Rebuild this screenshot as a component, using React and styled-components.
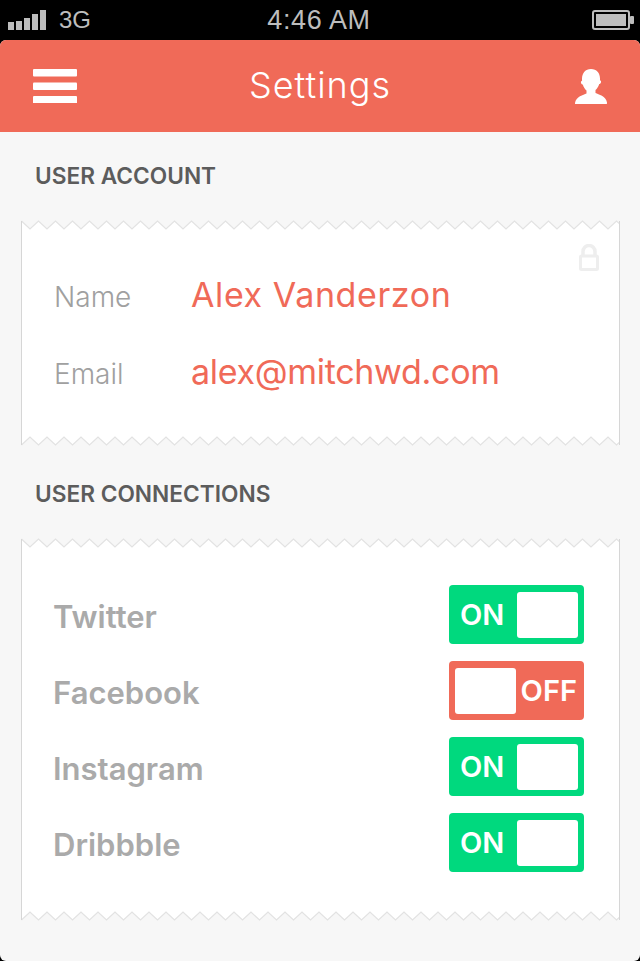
import React from 'react';
import styled, { createGlobalStyle } from 'styled-components';

const GlobalStyle = createGlobalStyle`
  html, body { margin: 0; padding: 0; background: #000; }
  * { box-sizing: border-box; }
  body { font-family: 'Inter', 'Open Sans', sans-serif; }
`;

const Phone = styled.div`
  width: 640px;
  height: 961px;
  background: #000;
  overflow: hidden;
`;

const StatusBar = styled.div`
  height: 40px;
  display: grid;
  grid-template-columns: 1fr auto 1fr;
  align-items: center;
  padding: 0 6px 0 8px;
  color: #bdbdbd;
  font-family: 'Liberation Sans', Arial, sans-serif;
`;

const StatusLeft = styled.div`
  display: flex;
  align-items: center;
  gap: 13px;
`;

const Network = styled.span`
  font-size: 24px;
  line-height: 40px;
`;

const Clock = styled.span`
  font-size: 27px;
  line-height: 36px;
  letter-spacing: 0.6px;
  margin-left: -4px;
`;

const StatusRight = styled.div`
  display: flex;
  justify-content: flex-end;
`;

const Screen = styled.div`
  height: 921px;
  background: #f7f7f7;
  border-radius: 6px;
  overflow: hidden;
`;

const Header = styled.header`
  height: 92px;
  background: #f06a58;
  display: grid;
  grid-template-columns: 1fr auto 1fr;
  align-items: center;
  padding: 0 33px;
  svg:last-child {
    justify-self: end;
  }
`;

const Title = styled.h1`
  margin: 0 0 2px;
  font-size: 36px;
  font-weight: 300;
  letter-spacing: 1px;
  color: #fff;
`;

const Content = styled.main`
  padding: 0 20px 0 21px;
`;

const SectionTitle = styled.h2`
  margin: 0;
  height: ${({ $height }) => $height}px;
  padding: ${({ $top }) => $top || 0}px 0 2px 14px;
  display: flex;
  align-items: center;
  font-size: 22.7px;
  font-weight: 600;
  color: #5c5c5c;
`;

const Card = styled.section`
  position: relative;
`;

const CardBody = styled.div`
  background: #fff;
  border-left: 1px solid #d6d6d6;
  border-right: 1px solid #d6d6d6;
  padding: ${({ $padding }) => $padding};
  display: flex;
  flex-direction: column;
  gap: ${({ $gap }) => $gap}px;
`;

const Edge = styled.svg`
  display: block;
  width: 599px;
  height: 10px;
`;

const LockMark = styled.svg`
  position: absolute;
  top: 24px;
  right: 21px;
`;

const FieldRow = styled.div`
  display: flex;
  align-items: center;
  height: 48px;
`;

const FieldLabel = styled.span`
  width: 137px;
  font-size: 28px;
  font-weight: 300;
  color: #a0a0a0;
  padding-top: 6px;
`;

const FieldValue = styled.span`
  font-size: 34px;
  font-weight: 400;
  letter-spacing: ${({ $spacing }) => $spacing}px;
  color: #f06a58;
`;

const ConnectionRow = styled.div`
  display: flex;
  align-items: center;
  justify-content: space-between;
  height: 59px;
`;

const ConnectionName = styled.span`
  font-size: 31px;
  font-weight: 600;
  color: #aaaaaa;
  padding-top: 3px;
  margin-left: -1px;
`;

const Toggle = styled.div`
  width: 135px;
  height: 59px;
  border-radius: 4px;
  padding: 6px;
  display: flex;
  flex-direction: ${({ $on }) => ($on ? 'row' : 'row-reverse')};
  align-items: center;
  justify-content: space-between;
  background: ${({ $on }) => ($on ? '#00d97e' : '#f06a58')};
`;

const ToggleText = styled.span`
  flex: 1;
  text-align: ${({ $on }) => ($on ? 'left' : 'right')};
  padding: ${({ $on }) => ($on ? '0 0 0 5px' : '0 1px 0 0')};
  font-size: 29px;
  font-weight: 600;
  color: #fff;
`;

const Knob = styled.div`
  width: 61px;
  height: 46px;
  border-radius: 3px;
  background: #fff;
`;

const SignalIcon = () => (
  <svg width="38" height="20" viewBox="0 0 38 20" fill="#bdbdbd">
    <rect x="0" y="12" width="6" height="8" />
    <rect x="8" y="11" width="6" height="9" />
    <rect x="16" y="8" width="6" height="12" />
    <rect x="24" y="4" width="6" height="16" />
    <rect x="32" y="0" width="6" height="20" />
  </svg>
);

const BatteryIcon = () => (
  <svg width="42" height="20" viewBox="0 0 42 20">
    <rect x="1" y="1" width="36" height="18" rx="2" fill="none" stroke="#bdbdbd" strokeWidth="2" />
    <rect x="4" y="4" width="30" height="12" fill="#bdbdbd" />
    <rect x="38" y="6" width="4" height="8" rx="1" fill="#bdbdbd" />
  </svg>
);

const MenuIcon = () => (
  <svg width="44" height="34" viewBox="0 0 44 34" fill="#fff">
    <rect x="0" y="0" width="44" height="7.5" rx="1" />
    <rect x="0" y="13.5" width="44" height="7.5" rx="1" />
    <rect x="0" y="27" width="44" height="7.5" rx="1" />
  </svg>
);

const UserIcon = () => (
  <svg width="32" height="35" viewBox="0 0 32 35" fill="#fff">
    <path d="M16 0c5.600 0 9 4 9 9.500 0 .6 0 1.200-.1 1.700.9.200 1.300 1 1.100 2-.2 1.100-.9 1.800-1.800 1.800-.8 2.700-2.200 4.800-3.700 6v3c3 1.500 10.500 2.800 11.500 9.500 0 .5 0 1-.2 1.500H.2C0 35 0 34.500 0 34c1-6.700 8.500-8 11.500-9.500v-3c-1.500-1.200-2.900-3.300-3.700-6-.9 0-1.600-.7-1.800-1.800-.2-1 .2-1.800 1.100-2-.1-.5-.1-1.100-.1-1.700C7 4 10.400 0 16 0z" />
  </svg>
);

const LockIcon = () => (
  <LockMark width="20" height="27" viewBox="0 0 20 27">
    <path d="M4 12V7.500a6 6 0 0 1 12 0V12" fill="none" stroke="#eeeeee" strokeWidth="3.500" />
    <rect x="1.500" y="12" width="17" height="13.500" rx="1" fill="none" stroke="#eeeeee" strokeWidth="3" />
  </LockMark>
);

// zigzag tear along the top or bottom of a card
const TornEdge = ({ bottom }) => {
  const points = [];
  for (let i = 0; i <= 72; i++) {
    const x = 0.5 + i * 8.5;
    const up = bottom ? i % 2 === 1 : i % 2 === 0;
    points.push(`${x},${up ? 1 : 9}`);
  }
  const line = points.join(' ');
  const fill = bottom ? `0,0 ${line} 599,0` : `0,10 ${line} 599,10`;
  return (
    <Edge viewBox="0 0 599 10">
      <polygon points={fill} fill="#fff" />
      <polyline points={line} fill="none" stroke="#e2e2e2" strokeWidth="1.200" />
      <line x1="0.500" x2="0.500" y1={bottom ? 0 : 1} y2={bottom ? 9 : 10} stroke="#d6d6d6" />
      <line x1="598.500" x2="598.500" y1={bottom ? 0 : 1} y2={bottom ? 9 : 10} stroke="#d6d6d6" />
    </Edge>
  );
};

const fields = [
  { label: 'Name', value: 'Alex Vanderzon', spacing: 0.6 },
  { label: 'Email', value: 'alex@mitchwd.com', spacing: -0.3 },
];

const connections = [
  { name: 'Twitter', on: true },
  { name: 'Facebook', on: false },
  { name: 'Instagram', on: true },
  { name: 'Dribbble', on: true },
];

export default function App() {
  return (
    <Phone>
      <GlobalStyle />
      <StatusBar>
        <StatusLeft>
          <SignalIcon />
          <Network>3G</Network>
        </StatusLeft>
        <Clock>4:46 AM</Clock>
        <StatusRight>
          <BatteryIcon />
        </StatusRight>
      </StatusBar>
      <Screen>
        <Header>
          <MenuIcon />
          <Title>Settings</Title>
          <UserIcon />
        </Header>
        <Content>
          <SectionTitle $height={88}>USER ACCOUNT</SectionTitle>
          <Card>
            <TornEdge />
            <LockIcon />
            <CardBody $padding="40px 0 41px 32px" $gap={29}>
              {fields.map((f) => (
                <FieldRow key={f.label}>
                  <FieldLabel>{f.label}</FieldLabel>
                  <FieldValue $spacing={f.spacing}>{f.value}</FieldValue>
                </FieldRow>
              ))}
            </CardBody>
            <TornEdge bottom />
          </Card>
          <SectionTitle $height={92} $top={4}>USER CONNECTIONS</SectionTitle>
          <Card>
            <TornEdge />
            <CardBody $padding="37px 35px 39px 32px" $gap={17}>
              {connections.map((c) => (
                <ConnectionRow key={c.name}>
                  <ConnectionName>{c.name}</ConnectionName>
                  <Toggle $on={c.on}>
                    <ToggleText $on={c.on}>{c.on ? 'ON' : 'OFF'}</ToggleText>
                    <Knob />
                  </Toggle>
                </ConnectionRow>
              ))}
            </CardBody>
            <TornEdge bottom />
          </Card>
        </Content>
      </Screen>
    </Phone>
  );
}
